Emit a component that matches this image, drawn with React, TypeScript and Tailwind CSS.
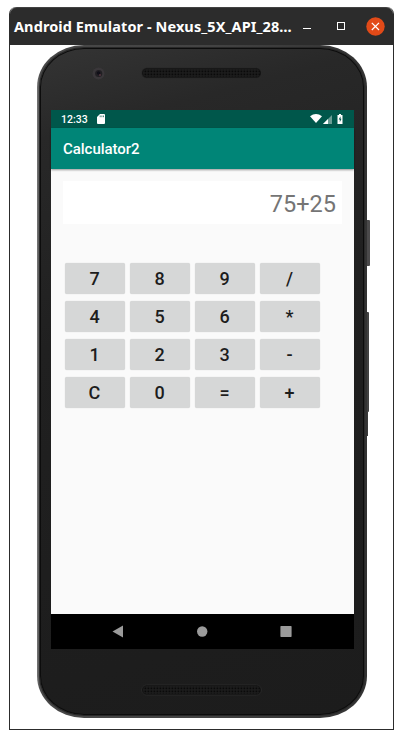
import React from "react";

const keys = ["7", "8", "9", "/", "4", "5", "6", "*", "1", "2", "3", "-", "C", "0", "=", "+"];

function TitleBar() {
  return (
    <header className="flex h-[38px] shrink-0 items-center rounded-t-[7px] border-t border-[#424242] bg-[#2c2c2c] pl-[4px] pr-[8px] text-white">
      <h1 className="w-[280px] whitespace-nowrap pb-[1px] font-['Noto_Sans','Open_Sans',sans-serif] text-[14.5px] font-bold leading-5 tracking-[0.09px]">
        Android Emulator - Nexus_5X_API_28…
      </h1>
      <svg className="ml-[8px] h-[11px] w-[11px]" viewBox="0 0 11 11" shapeRendering="crispEdges">
        <path d="M1 7.5H9" stroke="white" />
      </svg>
      <svg className="ml-[22px] h-[11px] w-[11px]" viewBox="0 0 11 11" shapeRendering="crispEdges">
        <rect x="2.5" y="1.5" width="7" height="7" fill="none" stroke="white" />
      </svg>
      <svg className="mb-[1px] ml-auto h-[19px] w-[19px]" viewBox="0 0 19 19">
        <circle cx="9.5" cy="9.5" r="9.2" fill="#e24a18" />
        <path d="M5.8 5.8L13 13M13 5.8L5.8 13" stroke="white" strokeWidth="1.2" />
      </svg>
    </header>
  );
}

function Speaker({ id }: { id: string }) {
  return (
    <svg className="h-[12px] w-[122px]" viewBox="0 0 122 12">
      <defs>
        <pattern id={id} width="3" height="3" patternUnits="userSpaceOnUse">
          <rect width="3" height="3" fill="#1d1d1d" />
          <rect x="0.5" y="0.5" width="1.8" height="1.8" fill="#0a0a0a" />
        </pattern>
      </defs>
      <rect x="0.5" y="0.8" width="120" height="10.4" rx="5.2" fill="#141414" stroke="#303030" strokeWidth="0.6" />
      <rect x="2" y="2" width="117" height="8" rx="4" fill={`url(#${id})`} />
    </svg>
  );
}

function StatusBar() {
  return (
    <div className="flex h-[18px] shrink-0 items-center bg-[#00574b] pl-[10px] pr-[10px] text-white">
      <span className="w-[27px] whitespace-nowrap pt-[1px] text-[10.5px] font-medium leading-[18px]">12:33</span>
      <svg className="ml-[9px] h-[10px] w-[8px]" viewBox="0 0 8 10">
        <path d="M3 0H7Q8 0 8 1V9Q8 10 7 10H1Q0 10 0 9V3Z" fill="white" />
        <path d="M3.2 1.5V3.2M4.9 1.5V3.2M6.5 1.5V3.2" stroke="#00574b" strokeWidth="0.7" />
      </svg>
      <svg className="mb-[1px] ml-auto h-[9px] w-[12px]" viewBox="0 0 12 9">
        <path d="M0 2.2Q6 -2 12 2.2L6 9Z" fill="white" />
      </svg>
      <svg className="h-[9px] w-[10px]" viewBox="0 0 10 9">
        <path d="M1 9L10 0V9Z" fill="#6b9d95" />
        <path d="M1 9L6 4V9Z" fill="white" />
      </svg>
      <svg className="ml-[5px] h-[10px] w-[7px]" viewBox="0 0 7 10">
        <path d="M2 0H4V1H5.5V10H.5V1H2Z" fill="white" />
        <path d="M3.5 2.3L1.7 5.6H2.8V8.2L4.5 4.8H3.5Z" fill="#00574b" />
      </svg>
    </div>
  );
}

function Screen() {
  return (
    <main className="flex h-[539px] w-[303px] flex-col bg-[#fafafa] font-['Roboto',sans-serif]">
      <StatusBar />
      <div className="flex h-[41px] shrink-0 items-center bg-[#008577] pl-[12px] text-[15px] font-medium leading-5 tracking-[-0.03px] text-white shadow-[0_1px_2px_rgba(0,0,0,0.4)]">
        Calculator2
      </div>
      <div className="ml-[12px] mt-[12px] flex h-[43px] w-[279px] shrink-0 items-center justify-end bg-white pr-[6px] pt-[2px] text-[23.5px] leading-7 text-[#757575]">
        75+25
      </div>
      <div className="ml-[14px] mt-[39px] grid w-[255px] grid-cols-4 gap-x-[5px] gap-y-[7px]">
        {keys.map((key) => (
          <button
            key={key}
            className="flex h-[31px] items-center justify-center rounded-[2px] bg-[#d6d7d7] pr-[1px] text-[18px] font-medium leading-5 text-[#1d1d1d] shadow-[0_0_1px_rgba(0,0,0,0.2)]"
          >
            {key}
          </button>
        ))}
      </div>
      <nav className="mt-auto flex h-[35px] shrink-0 items-center bg-black pl-[61px]">
        <svg className="h-[13px] w-[12px]" viewBox="0 0 12 13">
          <path d="M11 .5V12.5L.5 6.5Z" fill="#9b9b9b" />
        </svg>
        <svg className="ml-[73px] h-[11px] w-[11px]" viewBox="0 0 11 11">
          <circle cx="5.2" cy="5.5" r="5.2" fill="#9b9b9b" />
        </svg>
        <svg className="ml-[72px] h-[11px] w-[12px]" viewBox="0 0 12 11">
          <rect x="0.4" width="11.2" height="11" rx="0.7" fill="#9b9b9b" />
        </svg>
      </nav>
    </main>
  );
}

function Phone() {
  return (
    <section className="relative ml-[27px] h-[673px] w-[330px]">
      <i className="absolute left-[328px] top-[175px] h-[46px] w-[5px] rounded-r-[1px] bg-[#4b4a4b]" />
      <i className="absolute left-[328px] top-[267px] h-[100px] w-[4px] rounded-r-[1px] bg-[#434343]" />
      <i className="absolute left-[328px] top-[367px] h-[24px] w-[3px] bg-[#3a3a3a]" />
      <div className="relative h-full rounded-[47px/42px] bg-[linear-gradient(90deg,#777_0,#484848_3px,#444_50%,#333_100%)] p-[3px]">
        <div className="flex h-full flex-col items-center rounded-[44px/39px] border border-[#0c0c0c] bg-[linear-gradient(165deg,#343434_0%,#282828_12%,#202020_40%,#1c1c1c_100%)] shadow-[0_0_0_1px_#292929]">
          <div className="flex h-[61px] w-full shrink-0 items-start pl-[51px] pt-[18px]">
            <svg className="h-[13px] w-[13px]" viewBox="0 0 13 13">
              <circle cx="6.5" cy="6.5" r="6" fill="#3a373a" />
              <circle cx="6.7" cy="6.5" r="3.6" fill="#211f23" />
              <circle cx="6.5" cy="6" r="1.7" fill="#100f18" />
              <circle cx="8" cy="8" r="0.8" fill="#784352" />
            </svg>
            <div className="ml-[36px]">
              <Speaker id="top-mesh" />
            </div>
          </div>
          <div className="w-full pl-[10px]">
            <Screen />
          </div>
          <div className="w-full pl-[100px] pt-[35px]">
            <Speaker id="bottom-mesh" />
          </div>
        </div>
      </div>
    </section>
  );
}

export default function App() {
  return (
    <div className="h-[739px] w-[403px] overflow-hidden bg-white pl-[9px] pt-[7px]">
      <div className="flex h-[723px] w-[385px] flex-col rounded-t-[7px] border border-[#2c2c2c] border-t-0 bg-white">
        <TitleBar />
        <Phone />
      </div>
    </div>
  );
}
